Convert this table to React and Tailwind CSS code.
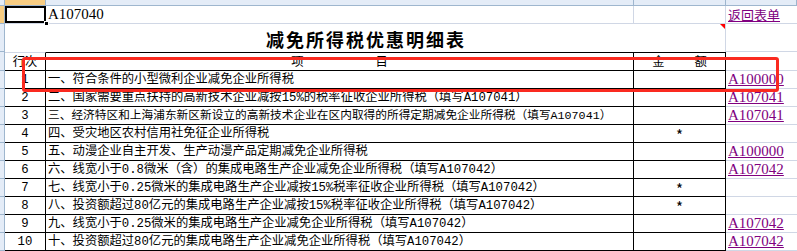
import React from "react";

const rows = [
  { n: 1, t: "一、符合条件的小型微利企业减免企业所得税", link: "A100000" },
  { n: 2, t: "二、国家需要重点扶持的高新技术企业减按15%的税率征收企业所得税（填写A107041）", link: "A107041" },
  { n: 3, t: "三、经济特区和上海浦东新区新设立的高新技术企业在区内取得的所得定期减免企业所得税（填写A107041）", link: "A107041", small: true },
  { n: 4, t: "四、受灾地区农村信用社免征企业所得税", star: true },
  { n: 5, t: "五、动漫企业自主开发、生产动漫产品定期减免企业所得税", link: "A100000" },
  { n: 6, t: "六、线宽小于0.8微米（含）的集成电路生产企业减免企业所得税（填写A107042）", link: "A107042" },
  { n: 7, t: "七、线宽小于0.25微米的集成电路生产企业减按15%税率征收企业所得税（填写A107042）", star: true },
  { n: 8, t: "八、投资额超过80亿元的集成电路生产企业减按15%税率征收企业所得税（填写A107042）", star: true },
  { n: 9, t: "九、线宽小于0.25微米的集成电路生产企业减免企业所得税（填写A107042）", link: "A107042" },
  { n: 10, t: "十、投资额超过80亿元的集成电路生产企业减免企业所得税（填写A107042）", link: "A107042" },
];

function RowHead({ sel }) {
  return (
    <div
      className={
        sel
          ? "w-[5px] shrink-0 border-r border-b border-[#9eb6ce] bg-[#f8cd82]"
          : "w-[5px] shrink-0 border-r border-b border-[#9eb6ce] bg-[#e4ecf7]"
      }
    />
  );
}

function ColHead({ cls, label, sel }) {
  return (
    <div
      className={
        (sel ? "bg-[#f8cd82] " : "bg-[#e4ecf7] ") +
        cls +
        " shrink-0 border-r border-b border-[#9eb6ce] overflow-hidden flex justify-center"
      }
    >
      <span className="font-['Liberation_Sans',sans-serif] text-[11px] leading-[11px] -mt-[9px] text-[#27415f]">
        {label}
      </span>
    </div>
  );
}

function LinkText({ children }) {
  return (
    <span className="font-['Liberation_Serif',serif] text-[15px] leading-[15px] text-[#800080] underline underline-offset-1">
      {children}
    </span>
  );
}

export default function App() {
  return (
    <div className="relative w-[797px] h-[251px] overflow-hidden bg-white text-black font-['Liberation_Mono','Noto_Sans_CJK_SC',monospace] text-[12.3px]">
      {/* column header strip */}
      <div className="flex h-[6px]">
        <div className="w-[5px] shrink-0 bg-[#e4ecf7] border-r border-b border-[#9eb6ce]" />
        <ColHead cls="w-[41px]" label="A" sel />
        <ColHead cls="w-[588px]" label="B" />
        <ColHead cls="w-[92px]" label="C" />
        <ColHead cls="flex-1" label="D" />
      </div>

      {/* row 1 */}
      <div className="flex h-[18px]">
        <RowHead sel />
        <div className="relative w-[41px] shrink-0 border-b border-[#d0d7e5]">
          <div className="absolute inset-0 border-2 border-black" />
          <div className="absolute -right-[3px] -bottom-[3px] w-[5px] h-[5px] bg-black border border-white" />
        </div>
        <div className="w-[588px] shrink-0 border-r border-b border-[#d0d7e5] flex items-end pl-[2px] pb-[1px]">
          <span className="font-['Liberation_Serif',serif] text-[15px] leading-[15px]">A107040</span>
        </div>
        <div className="w-[92px] shrink-0 border-r border-b border-[#d0d7e5]" />
        <div className="flex-1 border-b border-[#d0d7e5] flex items-end pl-[2px] pb-[2px]">
          <span className="font-['Noto_Sans_CJK_SC',sans-serif] text-[13px] leading-[13px] text-[#800080] underline underline-offset-1">
            返回表单
          </span>
        </div>
      </div>

      {/* title row */}
      <div className="flex h-[28px]">
        <RowHead />
        <div className="relative w-[721px] shrink-0 border-r border-[#d0d7e5] flex items-center justify-center pt-[1px]">
          <span className="font-['Noto_Sans_CJK_SC',sans-serif] font-bold text-[18px] leading-[20px] tracking-[2px] pl-[2px]">
            减免所得税优惠明细表
          </span>
          <div className="absolute top-0 right-0 w-0 h-0 border-t-[5px] border-l-[5px] border-t-[#ff0000] border-l-transparent" />
        </div>
        <div className="flex-1 border-b border-[#d0d7e5]" />
      </div>

      {/* header row */}
      <div className="flex h-[19px]">
        <RowHead />
        <div className="w-[41px] shrink-0 border-t border-t-[#d0d7e5] border-r border-b border-r-black border-b-black flex items-center justify-center">
          <span className="font-['Noto_Sans_CJK_SC',sans-serif]">行次</span>
        </div>
        <div className="w-[588px] shrink-0 border-t border-r border-b border-black flex items-center justify-center gap-[72px] font-['Noto_Sans_CJK_SC',sans-serif]">
          <span>项</span>
          <span>目</span>
        </div>
        <div className="w-[92px] shrink-0 border-t border-r border-b border-black flex items-center justify-center gap-[30px] font-['Noto_Sans_CJK_SC',sans-serif]">
          <span>金</span>
          <span>额</span>
        </div>
        <div className="flex-1 border-b border-[#d0d7e5]" />
      </div>

      {/* data rows */}
      {rows.map((r) => (
        <div key={r.n} className="flex h-[18px]">
          <RowHead />
          <div className="w-[41px] shrink-0 border-r border-b border-black flex items-end justify-center pb-[1px] leading-[14px]">
            {r.n}
          </div>
          <div
            className={
              r.small
                ? "w-[588px] shrink-0 border-r border-b border-black flex items-end pl-[2px] pb-[1px] leading-[14px] whitespace-nowrap overflow-hidden text-[11.7px]"
                : "w-[588px] shrink-0 border-r border-b border-black flex items-end pl-[2px] pb-[1px] leading-[14px] whitespace-nowrap overflow-hidden"
            }
          >
            {r.t}
          </div>
          <div className="w-[92px] shrink-0 border-r border-b border-black flex items-center justify-center">
            {r.star ? (
              <span className="font-['Noto_Sans_CJK_SC',sans-serif] text-[15px] leading-[12px] pt-[3px]">*</span>
            ) : null}
          </div>
          <div className="flex-1 border-b border-[#d0d7e5] flex items-end pl-[2px] pb-[1px]">
            {r.link ? <LinkText>{r.link}</LinkText> : null}
          </div>
        </div>
      ))}

      {/* red highlight box */}
      <div className="pointer-events-none absolute left-[22px] top-[57px] w-[757px] h-[35px] border-[3px] border-[#fa2a20] rounded-[3px]" />
    </div>
  );
}
